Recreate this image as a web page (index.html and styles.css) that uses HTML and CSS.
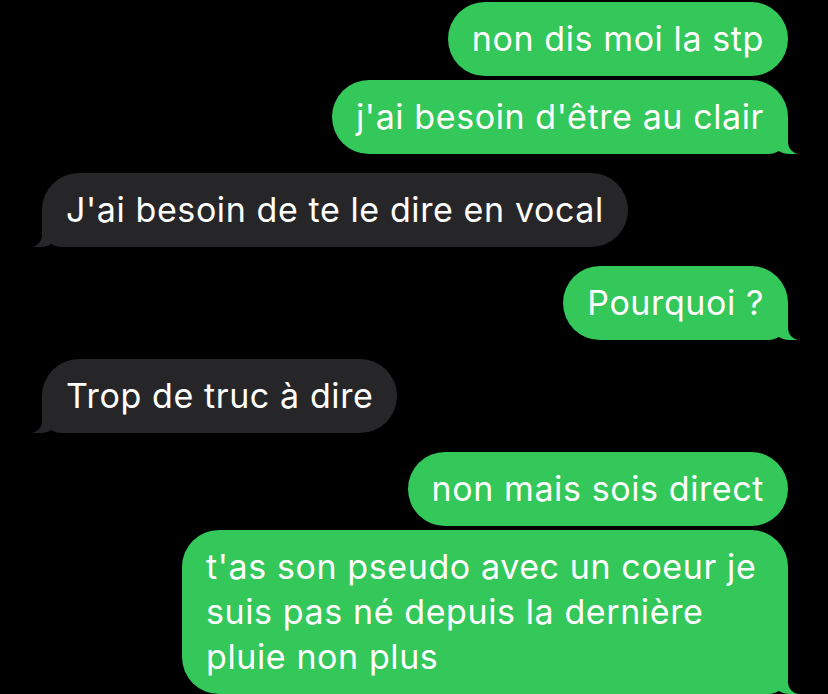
FILE: index.html
```
<!DOCTYPE html>
<html lang="fr">
<head>
    <meta charset="UTF-8">
    <meta name="viewport" content="width=device-width, initial-scale=1.0">
    <title>Messages</title>
    <link rel="stylesheet" href="styles.css">
</head>
<body>
    <div class="chat">
        <div class="bubble me">non dis moi la stp</div>
        <div class="bubble me tail">j'ai besoin d'être au clair</div>

        <div class="bubble them tail group">J'ai besoin de te le dire en vocal</div>

        <div class="bubble me tail group">Pourquoi ?</div>

        <div class="bubble them tail group">Trop de truc à dire</div>

        <div class="bubble me group">non mais sois direct</div>
        <div class="bubble me tail">t'as son pseudo avec un coeur je suis pas né depuis la dernière pluie non plus</div>
    </div>
</body>
</html>
```

FILE: styles.css
```
body {
    margin: 0;
    background-color: #000;
    font-family: Inter, "Liberation Sans", sans-serif;
}
.chat {
    display: flex;
    flex-direction: column;
    gap: 4px;
    padding: 2px 40px 0 42px;
}
.bubble {
    position: relative;
    box-sizing: border-box;
    max-width: 606px;
    padding: 14px 24px 15px 24px;
    font-size: 34px;
    letter-spacing: 0.6px;
    line-height: 45px;
    color: #fff;
    border-radius: 37px;
}
.bubble.group {
    margin-top: 15px; /* espace entre les groupes */
}
.me {
    align-self: flex-end;
    background-color: #34c759;
}
.them {
    align-self: flex-start;
    background-color: #262628;
}

/* petite queue de la bulle */
.me.tail {
    border-bottom-right-radius: 20px;
}
.them.tail {
    border-bottom-left-radius: 20px;
}
.tail::before,
.tail::after {
    content: "";
    position: absolute;
    bottom: 0;
    height: 26px;
}
.me.tail::before {
    right: -10px;
    width: 28px;
    background-color: #34c759;
    border-bottom-left-radius: 20px 17px;
}
.me.tail::after {
    right: -14px;
    width: 14px;
    background-color: #000;
    border-bottom-left-radius: 12px;
}
.them.tail::before {
    left: -10px;
    width: 28px;
    background-color: #262628;
    border-bottom-right-radius: 20px 17px;
}
.them.tail::after {
    left: -14px;
    width: 14px;
    background-color: #000;
    border-bottom-right-radius: 12px;
}
```
